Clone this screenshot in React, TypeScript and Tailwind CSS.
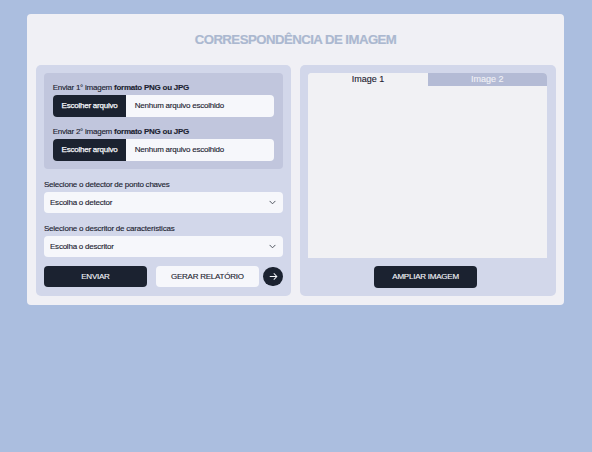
import React, { useState } from "react";

function FileField({ ordinal }: { ordinal: string }) {
  return (
    <div className="flex h-[35px] flex-col">
      <label className="h-[13px] whitespace-nowrap text-[8px] leading-[11px] tracking-[-0.25px]">
        Enviar {ordinal} imagem <b>formato PNG ou JPG</b>
      </label>
      <div className="flex h-[21.5px] items-center overflow-hidden rounded bg-[#f6f7fb] text-[8px] tracking-[-0.23px]">
        <button className="h-full w-[73.5px] bg-[#1b2230] pt-px text-[#f6f7fb] [-webkit-text-stroke:0.25px]">
          Escolher arquivo
        </button>
        <span className="pt-px pl-[8.5px]">Nenhum arquivo escolhido</span>
      </div>
    </div>
  );
}

function SelectField({ label, value }: { label: string; value: string }) {
  return (
    <div className="flex h-11 flex-col">
      <label className="h-[13px] text-[8px] leading-[11px] tracking-[-0.23px]">{label}</label>
      <button className="flex h-[21.5px] items-center justify-between rounded bg-[#f6f7fb] pt-px pr-[7px] pl-[6px] text-[8px] tracking-[-0.23px]">
        <span>{value}</span>
        <svg width="7" height="7" viewBox="0 0 16 16" fill="none" stroke="#4b515b" strokeWidth="2.2" strokeLinecap="round" strokeLinejoin="round">
          <path d="m2 5 6 6 6-6" />
        </svg>
      </button>
    </div>
  );
}

export default function App() {
  const [tab, setTab] = useState(0);
  const tabStyle = (i: number) =>
    i === tab ? "bg-[#f1f1f4] text-[#1b2230]" : "bg-[#b4bbd5] text-[#f1f1f6]";

  return (
    <div className="h-[452px] w-[592px] bg-[#abbedf] pt-[14px] pl-[27px] font-['Liberation_Sans',Arial,sans-serif] text-[#1b2230] [-webkit-text-stroke:0.12px]">
      <main className="flex h-[291px] w-[537px] flex-col rounded bg-[#f0f0f5] px-[8.5px]">
        <h1 className="h-[50.5px] pt-[18px] text-center text-[13.2px] leading-4 font-bold tracking-[-0.53px] text-[#abb8d0] [-webkit-text-stroke:0.2px]">
          CORRESPONDÊNCIA DE IMAGEM
        </h1>
        <div className="flex h-[231.5px] gap-[8.5px]">
          <section className="flex w-[255.75px] flex-col rounded-[5px] bg-[#d2d7ea] p-[8.5px]">
            <div className="flex h-24 flex-col gap-[9px] rounded bg-[#c1c6dd] px-[8.75px] pt-[9px]">
              <FileField ordinal="1°" />
              <FileField ordinal="2°" />
            </div>
            <div className="mt-[9.5px]">
              <SelectField label="Selecione o detector de ponto chaves" value="Escolha o detector" />
              <SelectField label="Selecione o descritor de características" value="Escolha o descritor" />
            </div>
            <div className="-mt-px flex h-[21.5px] items-center text-[8px] tracking-[-0.23px]">
              <button className="h-full w-[103px] rounded bg-[#1b2230] pt-px text-[#f6f7fb]">ENVIAR</button>
              <button className="ml-[9px] h-full w-[103px] rounded bg-[#f6f7fb] pt-px">GERAR RELATÓRIO</button>
              <button className="ml-[4.5px] flex size-[19.5px] items-center justify-center rounded-full bg-[#1b2230]">
                <svg width="9" height="9" viewBox="0 0 16 16" fill="none" stroke="#f6f7fb" strokeWidth="1.8" strokeLinecap="round" strokeLinejoin="round">
                  <path d="M2 8h12M9 3l5 5-5 5" />
                </svg>
              </button>
            </div>
          </section>
          <section className="flex w-[255.75px] flex-col items-center rounded-[5px] bg-[#d2d7ea] p-[8.5px]">
            <div className="h-[185px] w-full overflow-hidden rounded-t bg-[#f1f1f4]">
              <div className="flex h-[13px] text-[9px] leading-[13px]">
                <button className={`w-1/2 ${tabStyle(0)}`} onClick={() => setTab(0)}>Image 1</button>
                <button className={`w-1/2 ${tabStyle(1)}`} onClick={() => setTab(1)}>Image 2</button>
              </div>
            </div>
            <button className="mt-[8px] mr-1 h-[21.5px] w-[103px] rounded bg-[#1b2230] pt-px text-[8px] tracking-[-0.23px] text-[#f6f7fb]">
              AMPLIAR IMAGEM
            </button>
          </section>
        </div>
      </main>
    </div>
  );
}
